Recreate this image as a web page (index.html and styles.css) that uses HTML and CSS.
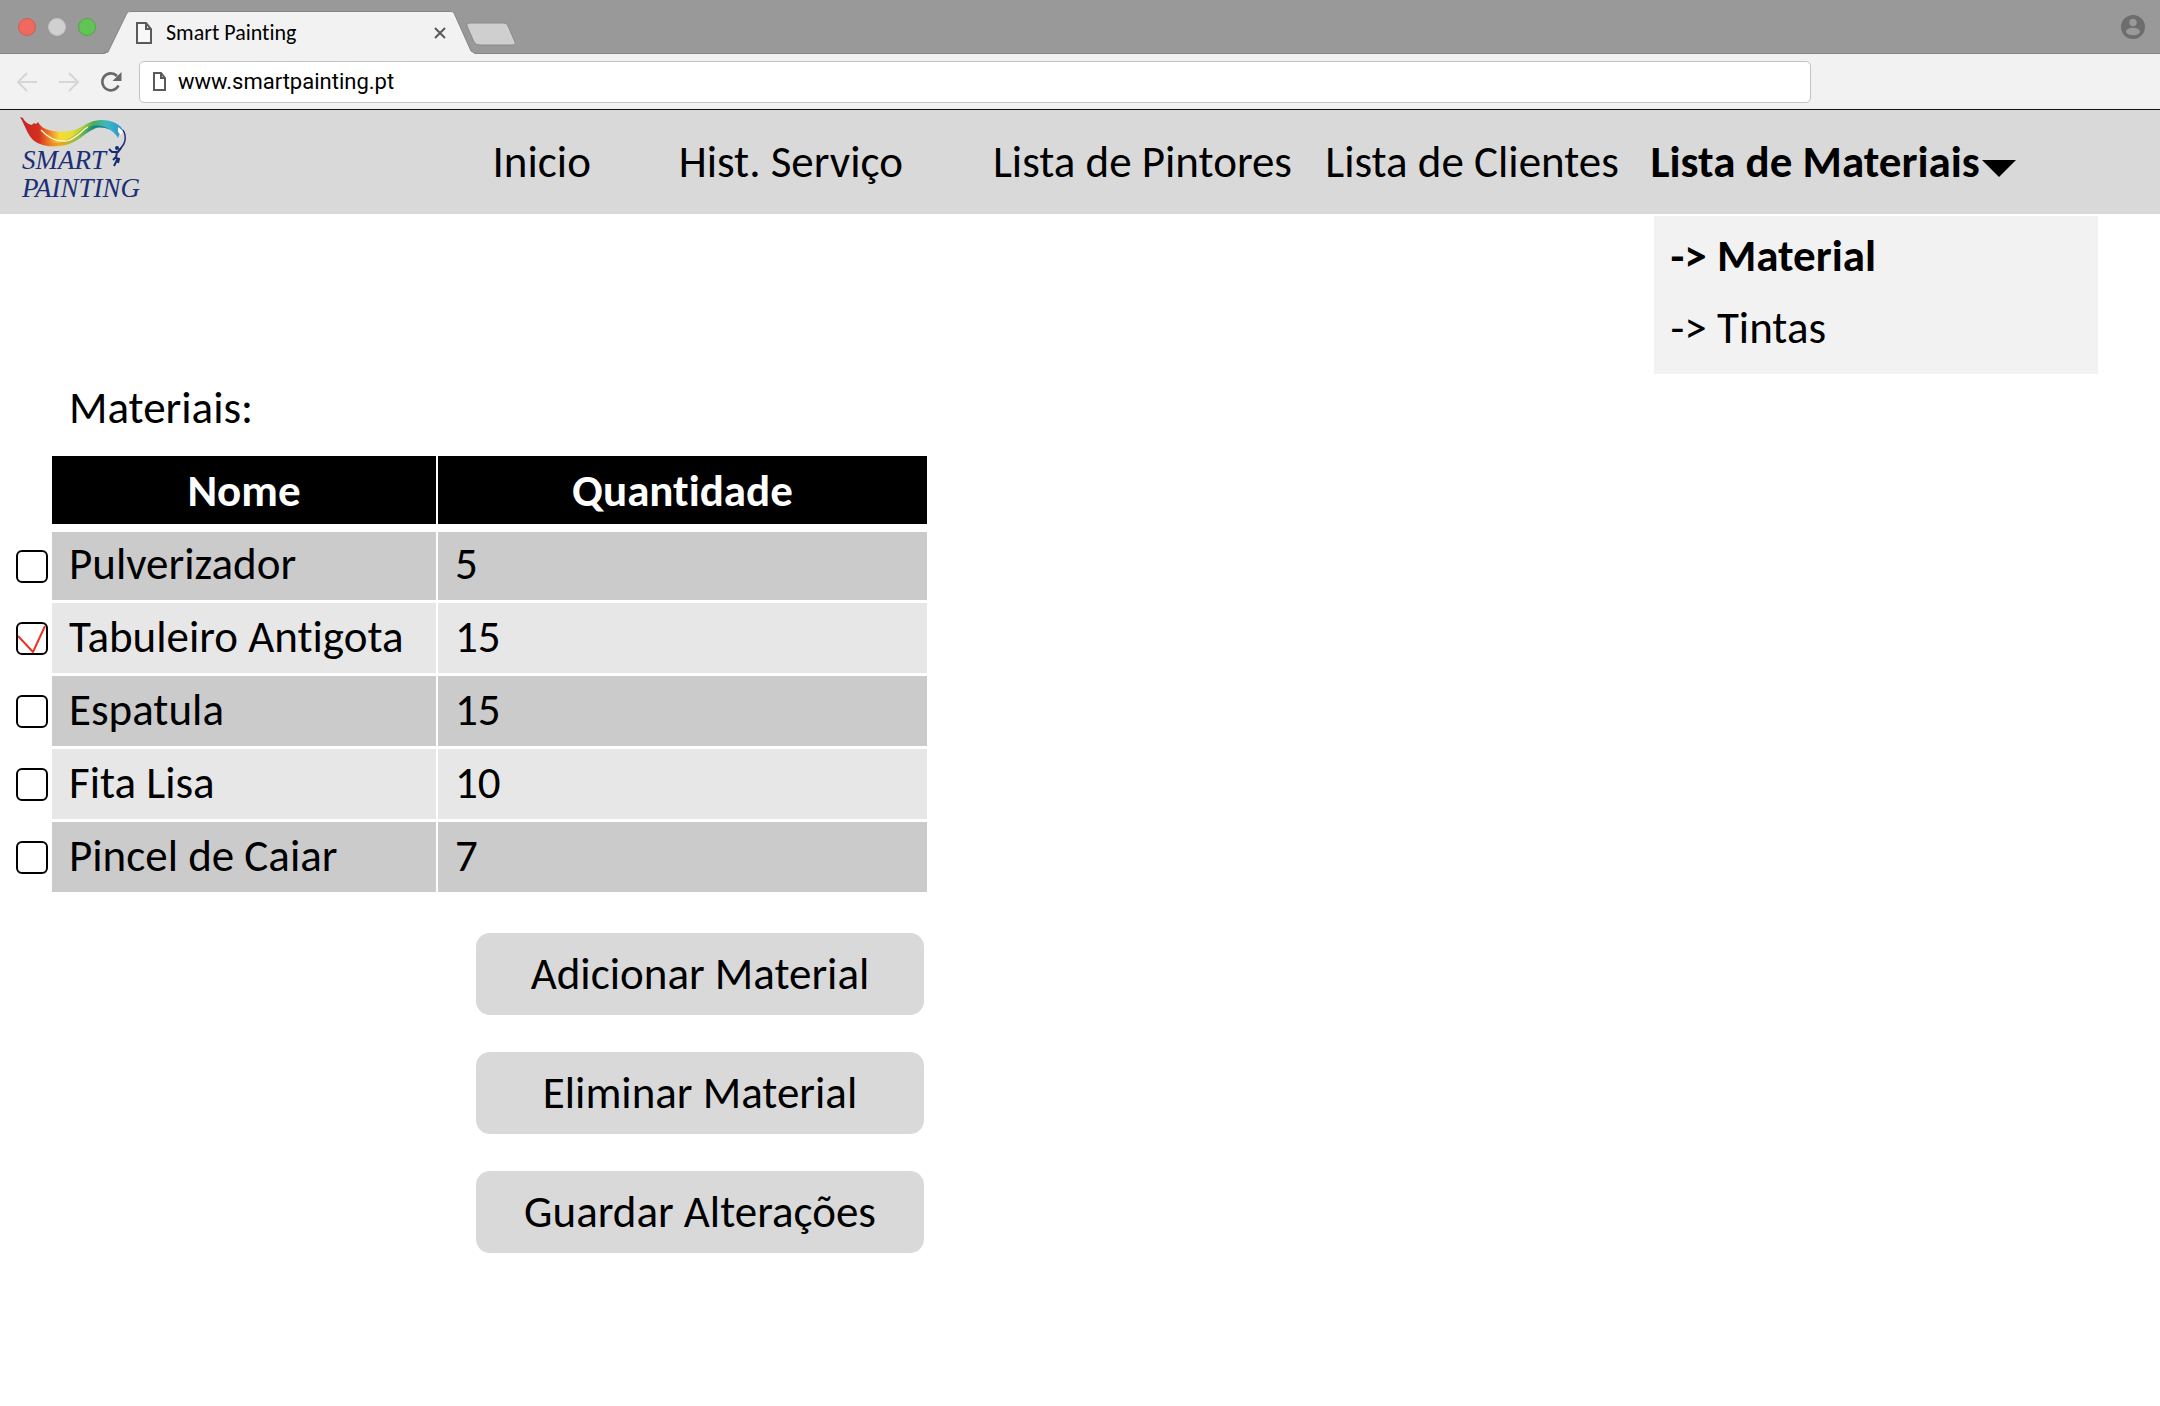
FILE: index.html
```html
<!DOCTYPE html>
<html lang="pt">
<head>
<meta charset="utf-8">
<title>Smart Painting</title>
<link rel="stylesheet" href="styles.css">
</head>
<body>
<div class="tabstrip">
  <div class="lights">
    <span class="light light-close"></span>
    <span class="light light-min"></span>
    <span class="light light-max"></span>
  </div>
  <div class="tab">
    <svg class="tab-shape" viewBox="0 0 412 43" aria-hidden="true">
      <path d="M-4 43 L0 41 L19 2 Q20 0 23 0 H343 Q345 0 346 2 L363 40 L367 43Z" fill="#f2f2f2"/>
      <path d="M-4 42 L0 41 L19 2 Q20 .5 23 .5 H343 Q345 .5 346 2 L363 40 L367 42" fill="none" stroke="#858585"/>
      <path d="M361 12 H396 Q399 12 400 15 L407 31 Q408 34 404 34 H372 Q368 34 366 31 L359 15 Q358 12 361 12Z" fill="#cfcfcf" stroke="#8a8a8a"/>
    </svg>
    <div class="tab-content">
      <svg class="tab-icon" viewBox="0 0 16 22" aria-hidden="true"><path d="M1 1H10L15 7V21H1Z M10 1V7H15" fill="#f8f8f8" stroke="#5a5a5a" stroke-width="2"/></svg>
      <span class="tab-title">Smart Painting</span>
      <button class="tab-close" aria-label="Fechar separador"><svg viewBox="0 0 12 12"><path d="M1 1L11 11M11 1L1 11" stroke="#5a5a5a" stroke-width="2"/></svg></button>
    </div>
  </div>
  <button class="profile" aria-label="Perfil"><svg viewBox="0 0 24 24"><circle cx="12" cy="12" r="12" fill="#6d6d6d"/><circle cx="12" cy="7.500" r="3.700" fill="#999"/><ellipse cx="12" cy="16.500" rx="7" ry="3.800" fill="#999"/></svg></button>
</div>
<div class="toolbar">
  <button class="tool" aria-label="Anterior"><svg viewBox="0 0 22 22"><path d="M21 11H3M11 2L2 11L11 20" fill="none" stroke="#d6d6d6" stroke-width="2"/></svg></button>
  <button class="tool" aria-label="Seguinte"><svg viewBox="0 0 22 22"><path d="M1 11H19M11 2L20 11L11 20" fill="none" stroke="#d6d6d6" stroke-width="2"/></svg></button>
  <button class="tool" aria-label="Recarregar"><svg viewBox="0 0 22 22"><path d="M18.500 14.500A8.500 8.500 0 1 1 17 5" fill="none" stroke="#686868" stroke-width="2.600"/><path d="M21.500 1V10H12.500Z" fill="#686868"/></svg></button>
  <div class="address">
    <svg class="address-icon" viewBox="0 0 13 19" aria-hidden="true"><path d="M1 1H8L12 6V18H1Z M8 1V6H12" fill="none" stroke="#5a5a5a" stroke-width="2"/></svg>
    <input class="address-input" type="text" value="www.smartpainting.pt" aria-label="Endereço">
  </div>
</div>
<header class="site-header">
  <a class="logo" href="#" aria-label="Smart Painting">
    <svg viewBox="0 0 160 103">
      <defs>
        <linearGradient id="ribbon" x1="20" y1="0" x2="125" y2="0" gradientUnits="userSpaceOnUse">
          <stop offset="0" stop-color="#c4232a"/><stop offset=".18" stop-color="#d4301f"/><stop offset=".28" stop-color="#ee7f26"/><stop offset=".38" stop-color="#f6dc32"/><stop offset=".5" stop-color="#e3dc38"/><stop offset=".6" stop-color="#a5cb3c"/><stop offset=".7" stop-color="#48ad5a"/><stop offset=".82" stop-color="#3cb8c4"/><stop offset="1" stop-color="#2a8fd0"/>
        </linearGradient>
        <linearGradient id="fold" x1="38" y1="0" x2="120" y2="0" gradientUnits="userSpaceOnUse">
          <stop offset="0" stop-color="#d2441f"/><stop offset=".25" stop-color="#f0a32a"/><stop offset=".5" stop-color="#8abf3c"/><stop offset=".68" stop-color="#138a80"/><stop offset="1" stop-color="#154a94"/>
        </linearGradient>
      </defs>
      <path d="M20 7L23 8L24 10L27 13L31 15L33 14L34 13L36 14L38 12L40 15C45 21 58 23 70 21C83 19 87 10 101 10C112 10 121 14 124 22L121 20L118 28C113 19 102 15 94 17C86 20 78 31 67 35C57 38 41 37 33 30C27 24 25 15 20 7Z" fill="url(#ribbon)"/>
      <path d="M86 18C93 14 104 15 110 20C104 17 98 17 94 19C86 22 79 31 69 34C61 37 46 36 40 33C50 34 58 33 64 31C75 27 78 21 86 18Z" fill="url(#fold)"/>
      <path d="M41 20C49 29 58 32 67 31C77 28 81 21 88 17" fill="none" stroke="#fffbd0" stroke-width="1.200"/>
      <path d="M118 17L123 21L121 25L118 22Z" fill="#fff"/>
      <path d="M123 20C127 27 126 34 118 41" fill="none" stroke="#26347a" stroke-width="1.500"/>
      <circle cx="117" cy="38" r="2" fill="#152c70"/>
      <path d="M109 39L112 42L118 42L121 38M117 41L116 48L119 49L118 53M116 47L113 50M118 48L114 56" fill="none" stroke="#152c70" stroke-width="2"/>
      <text class="logo-text" x="22" y="59">SMART</text>
      <text class="logo-text" x="22" y="87">PAINTING</text>
    </svg>
  </a>
  <nav class="nav">
    <a class="nav-link" href="#">Inicio</a>
    <a class="nav-link" href="#">Hist. Serviço</a>
    <a class="nav-link" href="#">Lista de Pintores</a>
    <a class="nav-link" href="#">Lista de Clientes</a>
    <div class="nav-group">
      <a class="nav-link current" href="#">Lista de Materiais<svg class="caret" viewBox="0 0 34 17" aria-hidden="true"><path d="M0 0H34L17 17Z"/></svg></a>
      <div class="submenu">
        <a class="submenu-link current" href="#">-&gt; Material</a>
        <a class="submenu-link" href="#">-&gt; Tintas</a>
      </div>
    </div>
  </nav>
</header>
<main class="content">
  <h1 class="title">Materiais:</h1>
  <table class="materials">
    <colgroup><col class="col-check"><col class="col-name"><col></colgroup>
    <thead><tr><td></td><th>Nome</th><th>Quantidade</th></tr></thead>
    <tbody>
      <tr><td><input class="check" type="checkbox" id="m1"></td><td><label for="m1">Pulverizador</label></td><td>5</td></tr>
      <tr><td><input class="check" type="checkbox" id="m2" checked></td><td><label for="m2">Tabuleiro Antigota</label></td><td>15</td></tr>
      <tr><td><input class="check" type="checkbox" id="m3"></td><td><label for="m3">Espatula</label></td><td>15</td></tr>
      <tr><td><input class="check" type="checkbox" id="m4"></td><td><label for="m4">Fita Lisa</label></td><td>10</td></tr>
      <tr><td><input class="check" type="checkbox" id="m5"></td><td><label for="m5">Pincel de Caiar</label></td><td>7</td></tr>
    </tbody>
  </table>
  <div class="actions">
    <button class="action">Adicionar Material</button>
    <button class="action">Eliminar Material</button>
    <button class="action">Guardar Alterações</button>
  </div>
</main>
</body>
</html>
```
FILE: styles.css
```css
* { box-sizing: border-box; }
body {
  margin: 0;
  background: #fff;
  color: #000;
  font-family: Carlito, Lato, sans-serif;
  font-size: 45px;
  font-variant-ligatures: none;
}
svg { display: block; }
a { color: inherit; text-decoration: none; }
button { border: 0; padding: 0; background: none; color: inherit; font: inherit; font-variant-ligatures: none; }

.tabstrip {
  display: flex;
  align-items: center;
  height: 54px;
  padding: 0 15px 0 18px;
  background: #999;
  border-bottom: 1px solid #858585;
}
.lights { display: flex; gap: 12px; }
.light { width: 18px; height: 18px; border-radius: 50%; border: 1px solid; }
.light-close { background: #ee6a5f; border-color: #d8594e; }
.light-min { background: #d0d0d0; border-color: #c2c2c2; }
.light-max { background: #62c454; border-color: #50a844; }
.tab { position: relative; align-self: flex-end; width: 412px; height: 43px; margin: 0 auto -1px 12px; }
.tab-shape { position: absolute; left: 0; top: 0; width: 412px; height: 43px; overflow: visible; }
.tab-content { position: relative; display: flex; align-items: center; width: 338px; height: 43px; padding-left: 28px; }
.tab-icon { width: 16px; height: 22px; }
.tab-title { margin: 0 auto 0 14px; font-size: 22px; line-height: 24px; }
.tab-close svg { width: 12px; height: 12px; }
.profile svg { width: 24px; height: 24px; }

.toolbar {
  display: flex;
  align-items: center;
  gap: 20px;
  height: 56px;
  padding: 0 16px;
  background: #f2f2f2;
  border-bottom: 1px solid #111;
}
.tool svg { width: 22px; height: 22px; }
.address {
  display: flex;
  align-items: center;
  gap: 12px;
  flex: 1;
  height: 42px;
  margin: 0 333px 0 -3px;
  padding: 0 13px;
  background: #fff;
  border: 1px solid #c4c4c4;
  border-radius: 5px;
}
.address-icon { width: 13px; height: 19px; }
.address-input { flex: 1; border: 0; padding: 0; background: none; outline: 0; font: 22px Roboto, sans-serif; color: #000; }

.site-header { position: relative; height: 104px; background: #d9d9d9; }
.logo { position: absolute; left: 0; top: 0; }
.logo svg { width: 160px; height: 103px; }
.logo-text { font: italic 27px "Monotype Corsiva", "Z003", "Liberation Serif", serif; fill: #1b2f76; }
.nav {
  display: grid;
  grid-template-columns: 186fr 314fr 332fr 325fr 509fr;
  align-items: center;
  height: 100%;
  padding-left: 22.8%;
  line-height: 54px;
  white-space: nowrap;
}
.nav > * { min-width: 0; }
.nav-group { position: relative; display: flex; align-items: center; height: 104px; }
.current { font-weight: 700; }
.nav-group > .nav-link { display: flex; align-items: center; gap: 2px; }
.caret { width: 34px; height: 17px; margin-top: 12px; }
.submenu {
  position: absolute;
  top: 106px;
  left: 3px;
  width: 444px;
  padding: 4px 17px 10px;
  background: #f2f2f2;
}
.submenu-link { display: block; line-height: 72px; }

.content { max-width: 927px; padding-top: 170px; }
.title { margin: 0 0 24px 69px; font-size: 45px; font-weight: 400; line-height: 48px; }
.materials { width: 100%; table-layout: fixed; border-spacing: 0; }
.col-check { width: 52px; }
.col-name { width: 384px; }
.materials td, .materials th { height: 73px; padding: 0 0 2px 17px; border-top: 3px solid #fff; line-height: 54px; text-align: left; }
.materials th { height: 68px; padding: 2px 0 0; border-top: 0; background: #000; color: #fff; text-align: center; }
.materials thead td { height: 68px; border-top: 0; }
.materials tr > :last-child { border-left: 2px solid #fff; }
.materials tbody td { background: #e7e7e7; }
.materials tbody tr:nth-child(odd) td { background: #cbcbcb; }
.materials tbody tr:first-child td { height: 76px; padding-bottom: 4px; border-top-width: 8px; }
.materials tbody tr td:first-child { padding: 0 0 0 16px; background: #fff; }
.check {
  appearance: none;
  display: block;
  width: 32px;
  height: 33px;
  margin: 0;
  border: 2px solid #000;
  border-radius: 6px;
  background: #fff;
}
.check:checked {
  background: #fff url("data:image/svg+xml,%3Csvg xmlns='http://www.w3.org/2000/svg' viewBox='0 0 28 29'%3E%3Cpath d='M0 12L15 28L27 2' fill='none' stroke='%23f03022' stroke-width='2'/%3E%3C/svg%3E") center / 100% 100% no-repeat;
}
.actions { display: flex; flex-direction: column; align-items: flex-end; gap: 37px; padding: 41px 3px 40px 0; }
.action { width: 448px; height: 82px; padding-bottom: 2px; border-radius: 14px; background: #d9d9d9; }
```
